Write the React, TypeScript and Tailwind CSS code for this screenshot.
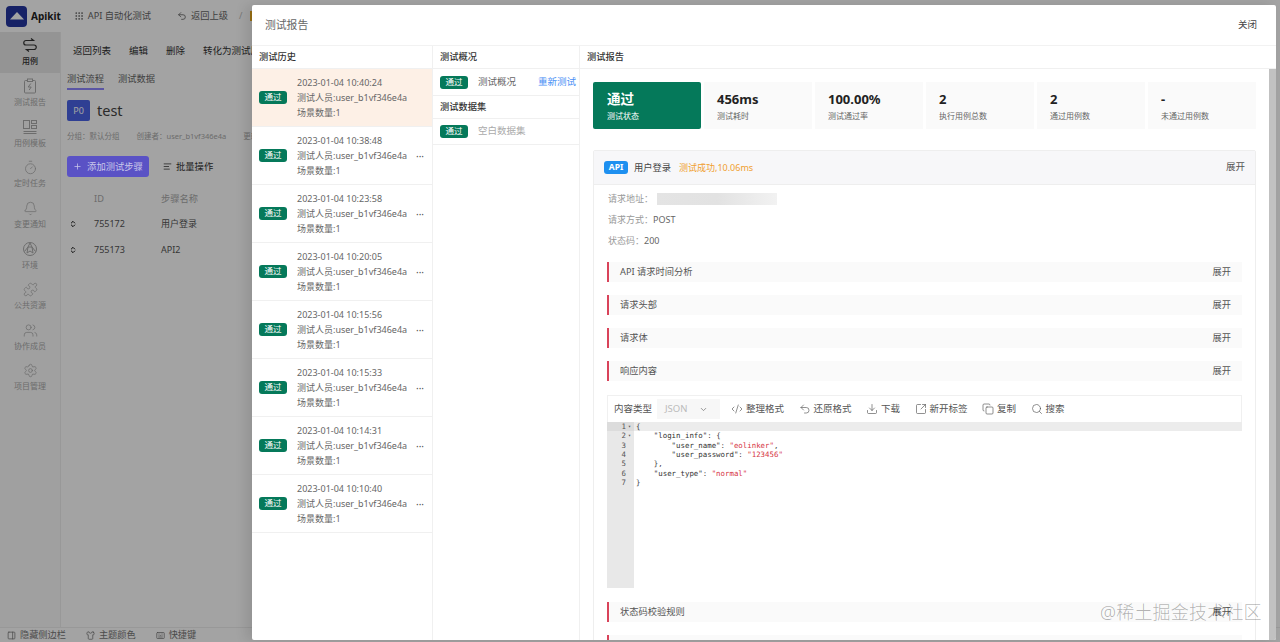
import {
  Bell,
  ChevronDown,
  CodeXml,
  Copy,
  Download,
  Grip,
  Keyboard,
  PanelRight,
  Plus,
  Puzzle,
  Search,
  Settings,
  Shirt,
  SquareArrowOutUpRight,
  Timer,
  Undo2,
  Users,
  AlignLeft,
  ChevronsUpDown,
} from "lucide-react";
import type { ReactNode } from "react";

const FONT = "font-['Noto_Sans','Noto_Sans_CJK_SC',sans-serif]";

const SwapIcon = () => (
  <svg width="16" height="16" viewBox="0 0 16 16" fill="none" stroke="currentColor" strokeWidth="1.2">
    <path d="M9 1.5 11.5 3.5H4a2 2 0 0 0 0 4.5h8a2 2 0 0 1 0 4.5H4.5L7 14.5" />
  </svg>
);

const ReportIcon = () => (
  <svg width="16" height="16" viewBox="0 0 16 16" fill="none" stroke="currentColor" strokeWidth="1">
    <rect x="2.5" y="2.5" width="11" height="12.5" rx="1" />
    <rect x="5.5" y="1" width="5" height="2.5" fill="#fff" />
    <path d="M8.8 5.5 6.2 9h3l-2 3" />
  </svg>
);

const TemplateIcon = () => (
  <svg width="16" height="16" viewBox="0 0 16 16" fill="none" stroke="currentColor" strokeWidth="1">
    <rect x="1.5" y="1.5" width="6" height="8" />
    <rect x="9.5" y="1.5" width="5" height="3" />
    <rect x="9.5" y="6.5" width="5" height="3" />
    <path d="M1.5 12.5h13M1.5 14.5h13" />
  </svg>
);

const EnvIcon = () => (
  <svg width="16" height="16" viewBox="0 0 16 16" fill="none" stroke="currentColor" strokeWidth="1">
    <circle cx="8" cy="8" r="6.5" />
    <path d="M8 2 6 6h4L8 2ZM2.5 10.5 6 6M13.5 10.5 10 6M6 6l-1 6M10 6l1 6M5 12l3-2 3 2" />
  </svg>
);

const navItems: { label: string; icon: ReactNode; active?: boolean }[] = [
  { label: "用例", icon: <SwapIcon />, active: true },
  { label: "测试报告", icon: <ReportIcon /> },
  { label: "用例模板", icon: <TemplateIcon /> },
  { label: "定时任务", icon: <Timer size={15} strokeWidth={1.2} /> },
  { label: "变更通知", icon: <Bell size={15} strokeWidth={1.2} /> },
  { label: "环境", icon: <EnvIcon /> },
  { label: "公共资源", icon: <Puzzle size={15} strokeWidth={1.2} /> },
  { label: "协作成员", icon: <Users size={15} strokeWidth={1.2} /> },
  { label: "项目管理", icon: <Settings size={15} strokeWidth={1.2} /> },
];

const historyTimes = [
  "2023-01-04 10:40:24",
  "2023-01-04 10:38:48",
  "2023-01-04 10:23:58",
  "2023-01-04 10:20:05",
  "2023-01-04 10:15:56",
  "2023-01-04 10:15:33",
  "2023-01-04 10:14:31",
  "2023-01-04 10:10:40",
];

const stats = [
  { value: "456ms", label: "测试耗时" },
  { value: "100.00%", label: "测试通过率" },
  { value: "2", label: "执行用例总数" },
  { value: "2", label: "通过用例数" },
  { value: "-", label: "未通过用例数" },
];

const toolbar = [
  { label: "整理格式", icon: <CodeXml size={12} strokeWidth={1.3} /> },
  { label: "还原格式", icon: <Undo2 size={12} strokeWidth={1.3} /> },
  { label: "下载", icon: <Download size={12} strokeWidth={1.3} /> },
  { label: "新开标签", icon: <SquareArrowOutUpRight size={12} strokeWidth={1.3} /> },
  { label: "复制", icon: <Copy size={12} strokeWidth={1.3} /> },
  { label: "搜索", icon: <Search size={12} strokeWidth={1.3} /> },
];

const Key = ({ children }: { children: string }) => <span className="text-[#333]">{children}</span>;
const Str = ({ children }: { children: string }) => <span className="text-[#d6333f]">{children}</span>;

const codeLines: ReactNode[] = [
  "{",
  <>    <Key>"login_info"</Key>: {"{"}</>,
  <>        <Key>"user_name"</Key>: <Str>"eolinker"</Str>,</>,
  <>        <Key>"user_password"</Key>: <Str>"123456"</Str></>,
  "    },",
  <>    <Key>"user_type"</Key>: <Str>"normal"</Str></>,
  "}",
];

const PassBadge = () => (
  <span className="flex h-[13px] w-[28px] shrink-0 items-center justify-center rounded-[3px] bg-[#05795a] text-[8.5px] leading-none text-white">
    通过
  </span>
);

const Section = ({ title }: { title: string }) => (
  <div className="flex h-[20px] items-center justify-between border-l-2 border-[#d9435a] bg-[#fafafa] pl-[11px] pr-[11px] text-[9.25px] text-[#555]">
    <span>{title}</span>
    <span>展开</span>
  </div>
);

const AppBackground = () => (
  <div className="flex h-[642px] w-[1280px] flex-col bg-white text-[#333]">
    <header className="flex h-[32px] shrink-0 items-center text-[9.25px] text-[#666]">
      <div className="ml-[6px] flex h-[21px] w-[21px] items-center justify-center rounded-[4px] bg-[#2436a0]">
        <svg width="14" height="8" viewBox="0 0 14 8">
          <path d="M7 0 14 7.5H0Z" fill="#fff" />
        </svg>
      </div>
      <span className="ml-[4px] text-[10px] font-bold text-[#222]">Apikit</span>
      <Grip size={10} className="ml-[13px]" />
      <span className="ml-[4px]">API 自动化测试</span>
      <Undo2 size={10} className="ml-[26px]" />
      <span className="ml-[4px]">返回上级</span>
      <span className="ml-[11px] text-[#bbb]">/</span>
      <span className="ml-[7px] h-[10px] w-[5px] bg-[#f0b020]" />
    </header>
    <div className="flex min-h-0 flex-1">
      <aside className="flex w-[61px] shrink-0 flex-col border-r border-[#eee] bg-[#fbfbfb]">
        {navItems.map((item) => (
          <div
            key={item.label}
            className={`flex h-[40.7px] flex-col items-center justify-center gap-[1px] text-[8px] leading-[13px] ${
              item.active ? "bg-[#e8e8e8] font-medium text-[#333]" : "text-[#aaa]"
            }`}
          >
            {item.icon}
            <span>{item.label}</span>
          </div>
        ))}
      </aside>
      <main className="w-[191px] shrink-0 overflow-hidden whitespace-nowrap pl-[6px]">
        <div className="flex h-[34px] items-center gap-[18px] pl-[6px] pt-[4px] text-[9.5px] text-[#333]">
          <span>返回列表</span>
          <span>编辑</span>
          <span>删除</span>
          <span>转化为测试用例</span>
        </div>
        <div className="flex h-[24px] gap-[14px] text-[9.25px] text-[#666]">
          <span className="h-[24px] border-b-2 border-[#8e86ff] leading-[26px]">测试流程</span>
          <span className="leading-[26px]">测试数据</span>
        </div>
        <div className="mt-[10px] flex items-center gap-[7px]">
          <span className="flex h-[21px] w-[23px] items-center justify-center rounded-[2px] bg-[#4a63e6] text-[9px] text-white">
            P0
          </span>
          <span className="text-[14.5px] leading-[21px] text-[#444]">test</span>
        </div>
        <div className="mt-[9px] flex gap-[17px] text-[7.5px] leading-[12px] text-[#aaa]">
          <span>分组：默认分组</span>
          <span>创建者：user_b1vf346e4a</span>
          <span>更新</span>
        </div>
        <div className="mt-[14px] flex items-center gap-[14px] text-[9.3px]">
          <span className="relative z-10 flex h-[21px] w-[82px] items-center justify-center gap-[5px] rounded-[3px] bg-[#5a52c5] text-[#c9c7ea]">
            <Plus size={9} />
            添加测试步骤
          </span>
          <span className="flex items-center gap-[4px]">
            <AlignLeft size={9} />
            批量操作
          </span>
        </div>
        <div className="mt-[9px] flex h-[25px] items-center text-[9.25px] text-[#aaa]">
          <span className="ml-[27px] w-[67px]">ID</span>
          <span>步骤名称</span>
        </div>
        {[
          ["755172", "用户登录"],
          ["755173", "API2"],
        ].map(([id, name]) => (
          <div key={id} className="flex h-[26px] items-center text-[9px] text-[#555]">
            <ChevronsUpDown size={8} className="ml-[2px] w-[8px] text-[#111]" strokeWidth={3} />
            <span className="ml-[17px] w-[67px]">{id}</span>
            <span>{name}</span>
          </div>
        ))}
      </main>
    </div>
    <footer className="flex h-[15px] shrink-0 items-center border-t border-[#eee] pl-[7px] text-[9.2px] text-[#777]">
      <PanelRight size={9} />
      <span className="ml-[4px]">隐藏侧边栏</span>
      <Shirt size={9} className="ml-[20px]" />
      <span className="ml-[4px]">主题颜色</span>
      <Keyboard size={9} className="ml-[20px]" />
      <span className="ml-[4px]">快捷键</span>
    </footer>
  </div>
);

const ReportModal = () => (
  <div className="absolute left-[252px] top-[5px] z-20 flex h-[635px] w-[1024px] flex-col overflow-hidden rounded-[2px] bg-white shadow-[-6px_0_12px_rgba(0,0,0,0.1)]">
    <div className="flex h-[41px] shrink-0 items-center justify-between border-b border-[#f2f2f2] pl-[13px] pr-[19px]">
      <span className="text-[10.8px] text-[#666]">测试报告</span>
      <span className="text-[9.5px] text-[#444]">关闭</span>
    </div>
    <div className="flex min-h-0 flex-1">
      {/* 测试历史 */}
      <div className="w-[181px] shrink-0 border-r border-[#f0f0f0]">
        <div className="flex h-[23px] items-center border-b border-[#f0f0f0] pl-[7px] text-[9.25px] font-medium text-[#333]">
          测试历史
        </div>
        {historyTimes.map((time, i) => (
          <div
            key={time}
            className={`flex h-[58px] items-center border-b border-[#f0f0f0] pl-[7px] pr-[8px] ${
              i === 0 ? "bg-[#fdf0e6]" : ""
            }`}
          >
            <PassBadge />
            <div className="ml-[10px] flex-1 whitespace-nowrap text-[9px] leading-[15px] text-[#666]">
              <div>{time}</div>
              <div>测试人员:user_b1vf346e4a</div>
              <div>场景数量:1</div>
            </div>
            {i > 0 && <span className="text-[10px] leading-none text-[#555]">···</span>}
          </div>
        ))}
      </div>

      {/* 测试概况 */}
      <div className="w-[147px] shrink-0 border-r border-[#f0f0f0]">
        <div className="flex h-[23px] items-center border-b border-[#f0f0f0] pl-[7px] text-[9.25px] font-medium text-[#333]">
          测试概况
        </div>
        <div className="flex h-[27px] items-center border-b border-[#f0f0f0] pl-[7px] pr-[3px]">
          <PassBadge />
          <span className="ml-[10px] flex-1 text-[9.5px] text-[#666]">测试概况</span>
          <span className="text-[9.5px] text-[#4a90f5]">重新测试</span>
        </div>
        <div className="flex h-[23px] items-center border-b border-[#f0f0f0] pl-[7px] text-[9.25px] font-medium text-[#333]">
          测试数据集
        </div>
        <div className="flex h-[26px] items-center border-b border-[#f0f0f0] pl-[7px]">
          <PassBadge />
          <span className="ml-[10px] text-[9.5px] text-[#aaa]">空白数据集</span>
        </div>
      </div>

      {/* 测试报告 */}
      <div className="flex min-w-0 flex-1 flex-col">
        <div className="flex h-[23px] shrink-0 items-center border-b border-[#f0f0f0] pl-[7px] text-[9.25px] font-medium text-[#333]">
          测试报告
        </div>
        <div className="flex min-h-0 flex-1">
          <div className="min-w-0 flex-1 overflow-hidden pl-[13px] pr-[13px] pt-[13px]">
            <div className="flex h-[47px] gap-[3px]">
              <div className="flex w-[108px] flex-col justify-center rounded-[2px] bg-[#05795a] pl-[14px] pt-[1px] text-white">
                <span className="text-[13.5px] font-bold leading-[19px]">通过</span>
                <span className="text-[8px] leading-[13px]">测试状态</span>
              </div>
              {stats.map((stat) => (
                <div key={stat.label} className="flex w-[108px] flex-col justify-center bg-[#fafafa] pl-[13px] pt-[1px]">
                  <span className="text-[13px] font-bold leading-[19px] text-[#222]">{stat.value}</span>
                  <span className="text-[8px] leading-[13px] text-[#666]">{stat.label}</span>
                </div>
              ))}
            </div>

            <div className="mt-[21px] rounded-[2px] border border-[#eeeeee]">
              <div className="flex h-[34px] items-center border-b border-[#eeeeee] bg-[#f7f7f9] pl-[10px] pr-[10px]">
                <span className="flex h-[13px] w-[24px] items-center justify-center rounded-[3px] bg-[#1e90f0] text-[8.5px] font-bold text-white">
                  API
                </span>
                <span className="ml-[6px] text-[9.25px] text-[#444]">用户登录</span>
                <span className="ml-[8px] flex-1 text-[9px] text-[#f0a030]">测试成功,10.06ms</span>
                <span className="text-[9.5px] text-[#555]">展开</span>
              </div>
              <div className="pl-[13px] pr-[13px] pt-[3px]">
                <div className="flex h-[21px] items-center pl-[1px] text-[9px] text-[#999]">
                  请求地址：
                  <span className="ml-[4px] h-[12px] w-[120px] bg-gradient-to-r from-[#e4e4e4] via-[#e2e2e2] to-[#f2f2f2]" />
                </div>
                <div className="h-[21px] pl-[1px] text-[9px] leading-[21px] text-[#999]">
                  请求方式：<span className="text-[#666]">POST</span>
                </div>
                <div className="h-[21px] pl-[1px] text-[9px] leading-[21px] text-[#999]">
                  状态码：<span className="text-[#666]">200</span>
                </div>
                <div className="mt-[11px] flex flex-col gap-[13px]">
                  <Section title="API 请求时间分析" />
                  <Section title="请求头部" />
                  <Section title="请求体" />
                  <Section title="响应内容" />
                </div>

                <div className="mt-[14px] border border-b-0 border-[#f0f0f0]">
                  <div className="flex h-[26px] items-center pl-[6px] text-[9.5px] text-[#555]">
                    <span>内容类型</span>
                    <span className="ml-[5px] flex h-[20px] w-[63px] items-center justify-between bg-[#f7f7f7] pl-[8px] pr-[12px] text-[#bbb]">
                      JSON
                      <ChevronDown size={9} className="text-[#777]" />
                    </span>
                    <div className="ml-[11px] flex gap-[14.5px]">
                      {toolbar.map((tool) => (
                        <span key={tool.label} className="flex items-center gap-[3px]">
                          {tool.icon}
                          {tool.label}
                        </span>
                      ))}
                    </div>
                  </div>
                </div>
                <div className="flex h-[166px]">
                  <div className="w-[27px] bg-[#e8e8e8] font-['DejaVu_Sans_Mono',monospace] text-[7.4px] leading-[9.33px] text-[#555]">
                    {codeLines.map((_, i) => (
                      <div key={i} className={`flex ${i === 0 ? "bg-[#dcdcdc]" : ""}`}>
                        <span className="w-[19px] text-right">{i + 1}</span>
                        {i < 2 && <span className="ml-[2px] text-[5px]">▾</span>}
                      </div>
                    ))}
                  </div>
                  <div className="flex-1 whitespace-pre font-['DejaVu_Sans_Mono',monospace] text-[7.4px] leading-[9.33px] text-[#444]">
                    {codeLines.map((line, i) => (
                      <div key={i} className={`pl-[2px] ${i === 0 ? "bg-[#ececec]" : ""}`}>
                        {line}
                      </div>
                    ))}
                  </div>
                </div>
                <div className="mt-[14px] flex flex-col gap-[13px]">
                  <Section title="状态码校验规则" />
                  <div className="h-[20px] border-l-2 border-[#d9435a] bg-[#fafafa]" />
                </div>
              </div>
            </div>
          </div>
          <div className="w-[7px] shrink-0 bg-[#c1c1c1]" />
        </div>
      </div>
    </div>
  </div>
);

export default function App() {
  return (
    <div className={`relative h-[642px] w-[1280px] overflow-hidden ${FONT}`}>
      <AppBackground />
      <div className="absolute inset-0 bg-black/36" />
      <ReportModal />
      <span className="absolute left-[1100px] top-[600px] z-30 text-[18px] font-light leading-[24px] tracking-[0.2px] text-black/30">
        @稀土掘金技术社区
      </span>
    </div>
  );
}
